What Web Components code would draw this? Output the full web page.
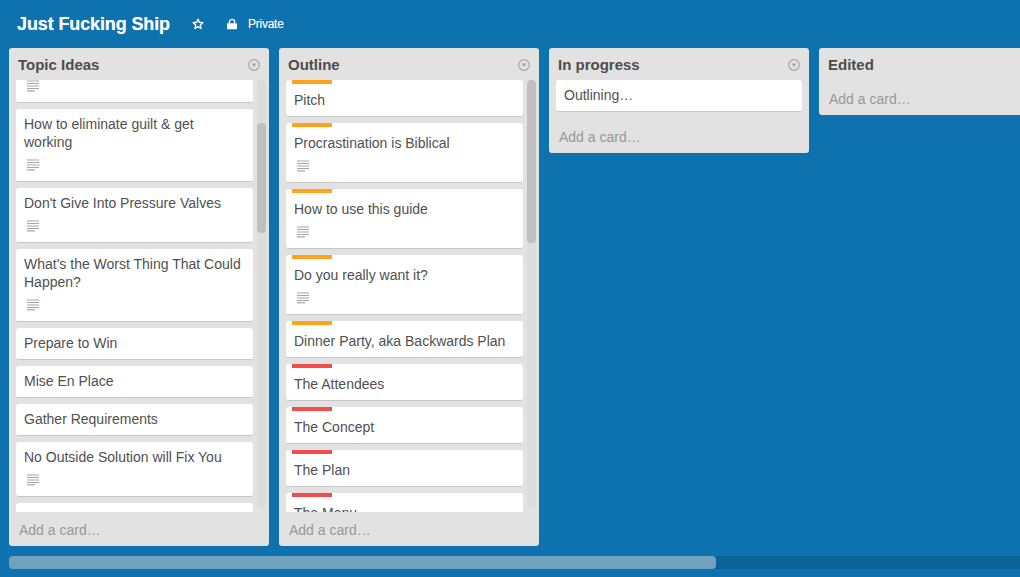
<!DOCTYPE html>
<html><head><meta charset="utf-8">
<style>
html,body{margin:0;height:100%;overflow:hidden;background:#0d72ae;font-family:"Liberation Sans",Arial,sans-serif}
</style></head><body>
<jfs-board>
  <board-header slot="header" title-text="Just Fucking Ship" privacy="Private"></board-header>
  <board-list title-text="Topic Ideas" menu scroll thumb-top="43" thumb-height="110">
    <board-card desc clip></board-card>
    <board-card desc>How to eliminate guilt &amp; get working</board-card>
    <board-card desc>Don't Give Into Pressure Valves</board-card>
    <board-card desc>What's the Worst Thing That Could Happen?</board-card>
    <board-card>Prepare to Win</board-card>
    <board-card>Mise En Place</board-card>
    <board-card>Gather Requirements</board-card>
    <board-card desc>No Outside Solution will Fix You</board-card>
    <board-card></board-card>
  </board-list>
  <board-list title-text="Outline" menu scroll thumb-top="0" thumb-height="163">
    <board-card label="#ffa31a">Pitch</board-card>
    <board-card label="#ffa31a" desc>Procrastination is Biblical</board-card>
    <board-card label="#ffa31a" desc>How to use this guide</board-card>
    <board-card label="#ffa31a" desc>Do you really want it?</board-card>
    <board-card label="#ffa31a">Dinner Party, aka Backwards Plan</board-card>
    <board-card label="#f44c4c">The Attendees</board-card>
    <board-card label="#f44c4c">The Concept</board-card>
    <board-card label="#f44c4c">The Plan</board-card>
    <board-card label="#f44c4c">The Menu</board-card>
  </board-list>
  <board-list title-text="In progress" menu>
    <board-card>Outlining…</board-card>
  </board-list>
  <board-list title-text="Edited"></board-list>
</jfs-board>
<script>
function def(name, html, init){
  customElements.define(name, class extends HTMLElement{
    connectedCallback(){
      if(this.shadowRoot) return;
      const r=this.attachShadow({mode:'open'});
      r.innerHTML=html;
      if(init) init(this,r);
    }
  });
}
def('jfs-board',`<style>
:host{display:flex;flex-direction:column;height:577px;width:1020px;overflow:hidden;background:#0d72ae}
.lists{display:flex;align-items:flex-start;gap:10px;padding-left:9px;height:498px;flex:none}
.bar{margin:10px 0 0 9px;height:13px;background:#0c6396;border-radius:4px 0 0 4px;flex:none}
.thumb{width:707px;height:13px;background:#70a2c0;border-radius:4px}
</style>
<slot name="header"></slot>
<div class="lists"><slot></slot></div>
<div class="bar"><div class="thumb"></div></div>`);
def('board-header',`<style>
:host{display:flex;align-items:center;height:48px;flex:none;color:#fff;padding-left:17px;box-sizing:border-box}
h1{margin:0;font:bold 18px/24px "Liberation Sans",Arial,sans-serif;letter-spacing:-.12px;width:153px;white-space:nowrap;text-shadow:0 0 1px rgba(255,255,255,.45)}
svg{display:block;flex:none}
.star{margin-left:22px}
.lock{margin-left:22px}
.p{margin-left:10px;font:12px/16px "Liberation Sans",Arial,sans-serif;letter-spacing:-.25px;text-shadow:0 0 1px rgba(255,255,255,.35)}
</style>
<h1></h1>
<svg class="star" width="12" height="12" viewBox="0 0 12 12"><path d="M6 1.2l1.4 3.1 3.4.4-2.5 2.3.7 3.4L6 8.7l-3 1.7.7-3.4L1.2 4.7l3.4-.4z" fill="none" stroke="#fff" stroke-width="1.4" stroke-linejoin="round"/></svg>
<svg class="lock" width="12" height="12" viewBox="0 0 12 12"><path d="M3.4 5.5V4a2.6 2.6 0 0 1 5.2 0v1.5" fill="none" stroke="#fff" stroke-width="1.4"/><rect x="1" y="5.2" width="10" height="6" rx=".8" fill="#fff"/></svg>
<span class="p"></span>`,(h,r)=>{
  r.querySelector('h1').textContent=h.getAttribute('title-text');
  r.querySelector('.p').textContent=h.getAttribute('privacy');
});
def('board-list',`<style>
:host{display:block;width:260px;flex:none;background:#e2e2e2;border-radius:3px;overflow:hidden}
.head{display:flex;align-items:center;justify-content:space-between;height:30px;padding:2px 9px 0;color:#4d4d4d;font:bold 15px/20px "Liberation Sans",Arial,sans-serif}
.menu{display:block;flex:none}
.body{display:flex;padding:0 7px}
.cards{flex:1;min-width:0;padding-bottom:1px}
:host([scroll]) .body{height:432px;padding-right:3px}
:host([scroll]) .cards{overflow:hidden;padding-bottom:0}
.track{width:9px;height:428px;margin-left:4px;background:#dcdcdc;border-radius:4px;flex:none;overflow:hidden}
.track div{background:#bfbfbf;border-radius:4px}
.foot{height:34px;padding-left:10px;color:#989898;font:14px/36px "Liberation Sans",Arial,sans-serif}
</style>
<div class="head"><span class="t"></span></div>
<div class="body"><div class="cards"><slot></slot></div></div>
<div class="foot">Add a card…</div>`,(h,r)=>{
  r.querySelector('.t').textContent=h.getAttribute('title-text');
  if(h.hasAttribute('menu')){
    r.querySelector('.head').insertAdjacentHTML('beforeend','<svg class="menu" width="12" height="12" viewBox="0 0 12 12"><circle cx="6" cy="6" r="5.3" fill="none" stroke="#a8a8a8" stroke-width="1.2"/><path d="M3.6 4.6h4.8L6 8z" fill="#a8a8a8"/></svg>');
  }
  if(h.hasAttribute('scroll')){
    const t=document.createElement('div');t.className='track';
    const i=document.createElement('div');
    i.style.marginTop=h.getAttribute('thumb-top')+'px';
    i.style.height=h.getAttribute('thumb-height')+'px';
    t.append(i);
    r.querySelector('.body').append(t);
  }
});
def('board-card',`<style>
:host{display:block;background:#fff;border-radius:3px;border-bottom:1px solid #c6c6c6;margin-bottom:6px;padding:6px 8px 7px;color:#505050;font:14px/18px "Liberation Sans",Arial,sans-serif}
:host([clip]){margin-top:-32px}
.label{display:block;width:40px;height:4px;margin:-6px 0 7px -2px}
.text{display:block;min-height:18px}
.desc{display:block;margin:8px 0 3px 3px}
</style>
<span class="text"><slot></slot></span>`,(h,r)=>{
  const lab=h.getAttribute('label');
  if(lab){
    const l=document.createElement('span');l.className='label';l.style.background=lab;
    r.querySelector('style').after(l);
  }
  if(h.hasAttribute('desc')){
    r.append(document.createRange().createContextualFragment('<svg class="desc" width="12" height="12" viewBox="0 0 12 12"><path d="M0 1h12M0 3.5h12M0 6h12M0 8.5h12" fill="none" stroke="#a6a6a6" stroke-width="1.2"/><path d="M0 10.8h8" fill="none" stroke="#a6a6a6" stroke-width="1.2"/></svg>'));
  }
});
</script>
</body></html>
